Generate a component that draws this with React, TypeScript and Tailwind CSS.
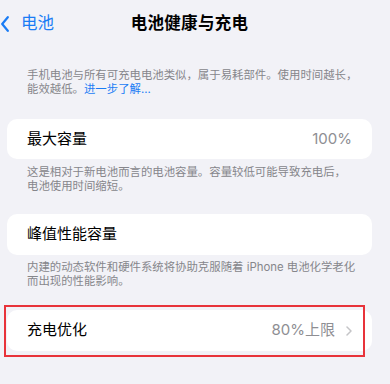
import React from "react";

const font = { fontFamily: 'Inter, "Noto Sans CJK SC", "Noto Sans", sans-serif' };

export default function App() {
  return (
    <div className="w-[390px] h-[384px] bg-[#f2f2f7] overflow-hidden" style={font}>
      <div className="w-[379px]">
        {/* header */}
        <div className="relative h-[46px] flex items-center">
          <div className="flex items-center pl-[1px] pt-[1px]">
            <svg width="8" height="16" viewBox="0 0 8 16" className="mt-[1px]">
              <path d="M6.8 1.2 L1.2 8 L6.8 14.8" fill="none" stroke="#1a7cf5" strokeWidth="2.2" strokeLinecap="round" strokeLinejoin="round" />
            </svg>
            <span className="ml-[12px] text-[16.5px] text-[#1a7cf5] leading-none">电池</span>
          </div>
          <div className="absolute inset-x-0 top-0 h-[46px] flex items-center justify-center pointer-events-none">
            <span className="text-[16.5px] font-semibold text-black leading-none tracking-[0.3px]">电池健康与充电</span>
          </div>
        </div>

        {/* description */}
        <div className="mt-[22px] px-[27px] text-[11.4px] leading-[14px] text-[#86868b] whitespace-nowrap">
          手机电池与所有可充电电池类似，属于易耗部件。使用时间越长，
          <br />
          能效越低。<span className="text-[#1a7cf5]">进一步了解...</span>
        </div>

        <div className="px-[7px] mt-[23px]">
          <div className="h-[40px] bg-white rounded-[10px] flex items-center justify-between px-[20px]">
            <span className="text-[15px] text-black">最大容量</span>
            <span className="text-[15px] text-[#8e8e93]">100%</span>
          </div>
          <div className="mt-[6px] px-[20px] text-[11.4px] leading-[14px] text-[#86868b] whitespace-nowrap">
            这是相对于新电池而言的电池容量。容量较低可能导致充电后，
            <br />
            电池使用时间缩短。
          </div>

          <div className="mt-[21px] h-[41px] bg-white rounded-[10px] flex items-center px-[20px]">
            <span className="text-[15px] text-black">峰值性能容量</span>
          </div>
          <div className="mt-[6px] px-[20px] text-[11.4px] leading-[13.5px] text-[#86868b] whitespace-nowrap">
            内建的动态软件和硬件系统将协助克服随着 iPhone 电池化学老化
            <br />
            而出现的性能影响。
          </div>

          <div className="relative mt-[22px]">
            <div className="h-[41px] bg-white rounded-[10px] flex items-center justify-between pl-[20px] pr-[20px]">
              <span className="text-[15px] text-black">充电优化</span>
              <div className="flex items-center">
                <span className="text-[15px] text-[#8e8e93]">80%上限</span>
                <svg width="6" height="10" viewBox="0 0 6 10" className="ml-[11px]">
                  <path d="M1 1 L5 5 L1 9" fill="none" stroke="#c4c4c7" strokeWidth="1.5" strokeLinecap="round" strokeLinejoin="round" />
                </svg>
              </div>
            </div>
            <div className="absolute left-[-3px] top-[-5px] w-[361px] h-[52px] border-2 border-[#e8333a] pointer-events-none" />
          </div>
        </div>
      </div>
    </div>
  );
}
